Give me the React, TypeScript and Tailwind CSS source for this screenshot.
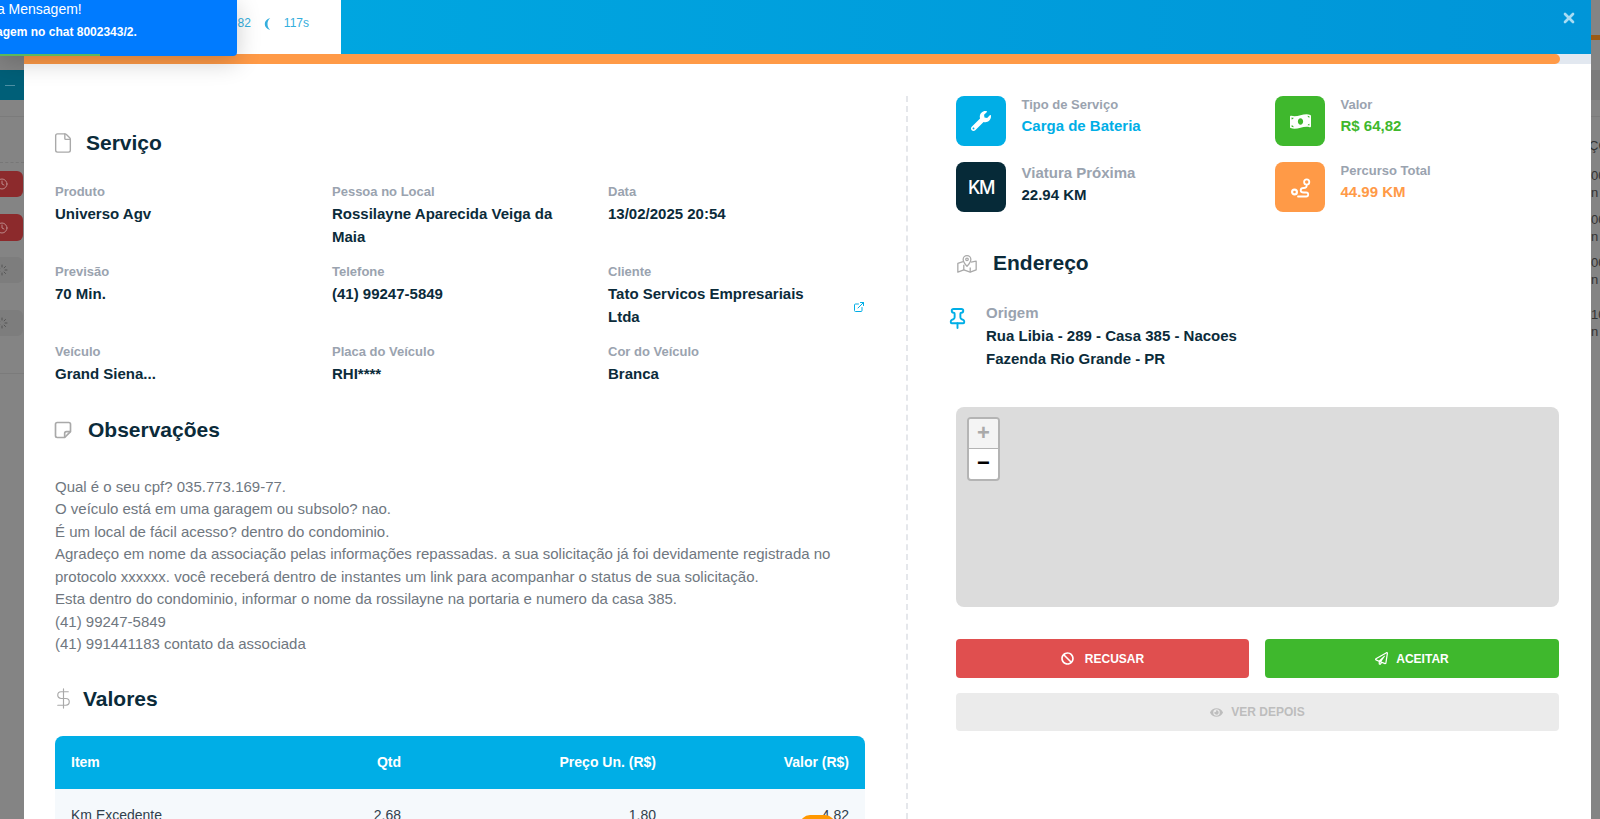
import React from 'react';
import { Clock, DollarSign, ExternalLink, File, Loader, Pin, X } from 'lucide-react';
import { FaBan, FaEye, FaMoneyBillWave, FaRegPaperPlane, FaWrench } from 'react-icons/fa';

const Field = ({ label, value, icon }: { label: string; value: string; icon?: boolean }) => (
  <div className="relative">
    <div className="text-[13px] leading-[22px] font-semibold text-[#9aa3af]">{label}</div>
    <div className="w-[228px] text-[15px] leading-[22.5px] font-bold text-[#0b2b3a]">{value}</div>
    {icon && <ExternalLink className="absolute right-0 top-[40px] text-[#00aee6]" size={12} />}
  </div>
);

const Stat = ({
  label,
  value,
  bg,
  color,
  big,
  children,
}: {
  label: string;
  value: string;
  bg: string;
  color: string;
  big?: boolean;
  children: React.ReactNode;
}) => (
  <div className="flex items-center gap-[15.5px]">
    <div className={`flex h-[50px] w-[50px] items-center justify-center rounded-lg text-white ${bg}`}>{children}</div>
    <div className={big ? '-mt-[6px]' : '-mt-[10px]'}>
      <div className={`font-semibold text-[#9aa3af] ${big ? 'text-[15px] leading-[22px]' : 'text-[13px] leading-[20px]'}`}>{label}</div>
      <div className={`text-[15px] leading-[22px] font-bold ${color}`}>{value}</div>
    </div>
  </div>
);

const Heading = ({ icon, title, gap, wide }: { icon: React.ReactNode; title: string; gap: string; wide?: boolean }) => (
  <div className={`flex items-center text-[#0b2b3a] ${gap}`}>
    <span className={`flex justify-center text-[#a9a9a9] ${wide ? 'w-[22px]' : 'w-[16px]'}`}>{icon}</span>
    <h2 className="text-[21px] leading-[30px] font-bold">{title}</h2>
  </div>
);

const NoteIcon = () => (
  <svg width="20" height="20" viewBox="0 0 24 24" fill="none" stroke="currentColor" strokeWidth="2" strokeLinejoin="round" className="shrink-0">
    <path d="M5 3h14a2 2 0 0 1 2 2v9l-7 7H5a2 2 0 0 1-2-2V5a2 2 0 0 1 2-2z" />
    <path d="M14 21v-5a2 2 0 0 1 2-2h5" />
  </svg>
);

const MapIcon = () => (
  <svg width="22" height="22" viewBox="0 0 24 24" fill="none" stroke="currentColor" strokeWidth="1.4" strokeLinejoin="round" className="shrink-0">
    <path d="M12 15.5c-2.4-2.6-4.2-5-4.2-7.4a4.2 4.2 0 0 1 8.4 0c0 2.4-1.8 4.8-4.2 7.4z" />
    <circle cx="12" cy="8" r="1.4" />
    <path d="M7.6 10.5 2 12.5V22l6.5-2.5 7 2.5 6.5-2.5V10l-5.6 1" />
    <path d="M8.5 14v5.5M15.5 17v5" />
  </svg>
);

const RouteIcon = () => (
  <svg width="24" height="24" viewBox="0 0 24 24" fill="none" stroke="currentColor" strokeWidth="1.8" strokeLinecap="round">
    <circle cx="18.7" cy="7" r="2.6" />
    <circle cx="6.5" cy="17" r="2.4" strokeWidth="2.2" />
    <path d="M18.7 10.5c0 2-1.5 2.5-3 2.5s-3 .7-3 2.2 1.5 2.3 3 2.3h2.5a2 2 0 0 1 0 4H10" />
  </svg>
);

const MoonIcon = () => (
  <svg width="7" height="12" viewBox="0 0 6 11" fill="currentColor" className="mt-[2px]">
    <path d="M5.5 0C2 1 .5 3 .5 5.5S2 10 5.5 11C3.5 9 3 7.5 3 5.5S3.5 2 5.5 0z" />
  </svg>
);

const BackdropLeft = () => (
  <div className="w-[24px] shrink-0 pt-[70px]">
    <div className="flex h-[30px] items-center bg-[#005f78] pl-[5px]">
      <div className="h-px w-[10px] bg-[#4d8fa3]" />
    </div>
    <div className="mt-[16px] h-px bg-[#7b7b7b]" />
    <div className="mt-[45px] border-t border-dashed border-[#777]" />
    <div className="mt-[8px] flex h-[26px] w-[23px] items-center overflow-hidden rounded-r-md bg-[#8c2a2c] text-[#b88]">
      <Clock size={12} className="-ml-[4px] shrink-0" />
    </div>
    <div className="mt-[17px] flex h-[27px] w-[23px] items-center overflow-hidden rounded-r-md bg-[#8c2a2c] text-[#b88]">
      <Clock size={12} className="-ml-[4px] shrink-0" />
    </div>
    <div className="mt-[16px] flex h-[26px] w-[23px] items-center overflow-hidden rounded-r-md bg-[#7d7d7d] text-[#555]">
      <Loader size={12} className="-ml-[4px] shrink-0" />
    </div>
    <div className="mt-[27px] flex h-[26px] w-[23px] items-center overflow-hidden rounded-r-md bg-[#7d7d7d] text-[#555]">
      <Loader size={12} className="-ml-[4px] shrink-0" />
    </div>
    <div className="mt-[37px] h-px bg-[#7b7b7b]" />
  </div>
);

const BackdropRight = () => (
  <div className="w-[9px] shrink-0 overflow-hidden pt-[35px] text-[13px] leading-[17px] whitespace-nowrap text-[#333]">
    <div className="h-[5px] bg-[#9c5a14]" />
    <div className="mt-[30px] h-[30px] bg-[#7b7b7b]" />
    <div className="mt-[16px] h-px bg-[#7b7b7b]" />
    <div className="mt-[20px] -ml-[2px]">ÇO</div>
    <div className="mt-[13px]">00</div>
    <div>n</div>
    <div className="mt-[10px]">00</div>
    <div>n</div>
    <div className="mt-[9px]">00</div>
    <div>n</div>
    <div className="mt-[18px]">10</div>
    <div>n</div>
  </div>
);

export default function App() {
  return (
    <div className="relative flex h-[819px] overflow-hidden bg-[#848484] font-['Liberation_Sans',sans-serif]">
      <BackdropLeft />

      <div className="flex h-full min-w-0 flex-1 flex-col overflow-hidden bg-white">
        <div className="flex h-[54px] shrink-0 bg-gradient-to-r from-[#00aae2] to-[#0095d8]">
          <div className="flex w-[317px] items-start justify-end gap-[13px] bg-white pt-[16px] pr-[32px] text-[12px] leading-[15px] text-[#35aedd]">
            <span>82</span>
            <MoonIcon />
            <span>117s</span>
          </div>
          <div className="flex flex-1 justify-end pt-[10px] pr-[14px] text-[#a8dcf3]">
            <X size={16} strokeWidth={4} />
          </div>
        </div>
        <div className="h-[10px] shrink-0 bg-[#e2e8f0]">
          <div className="h-full w-[1536px] rounded-r-full bg-[#ff9a47]" />
        </div>

        <div className="flex min-h-0 flex-1 pt-[32px]">
          <div className="w-[882px] shrink-0 pr-[41px] pl-[31px]">
            <div className="pt-[32px]">
              <Heading gap="gap-[15px]" icon={<File size={22} strokeWidth={1.5} className="shrink-0" />} title="Serviço" />
            </div>
            <div className="mt-[23px] grid grid-cols-[277px_276px_257px] gap-y-[13px]">
              <Field label="Produto" value="Universo Agv" />
              <Field label="Pessoa no Local" value="Rossilayne Aparecida Veiga da Maia" />
              <Field label="Data" value="13/02/2025 20:54" />
              <Field label="Previsão" value="70 Min." />
              <Field label="Telefone" value="(41) 99247-5849" />
              <Field label="Cliente" value="Tato Servicos Empresariais Ltda" icon />
              <Field label="Veículo" value="Grand Siena..." />
              <Field label="Placa do Veículo" value="RHI****" />
              <Field label="Cor do Veículo" value="Branca" />
            </div>

            <div className="mt-[29px]">
              <Heading gap="gap-[17px]" icon={<NoteIcon />} title="Observações" />
            </div>
            <div className="mt-[31px] text-[15px] leading-[22.5px] text-[#6f7780]">
              <p>Qual é o seu cpf? 035.773.169-77.</p>
              <p>O veículo está em uma garagem ou subsolo? nao.</p>
              <p>É um local de fácil acesso? dentro do condominio.</p>
              <p>
                Agradeço em nome da associação pelas informações repassadas. a sua solicitação já foi devidamente registrada no
                protocolo xxxxxx. você receberá dentro de instantes um link para acompanhar o status de sua solicitação.
              </p>
              <p>Esta dentro do condominio, informar o nome da rossilayne na portaria e numero da casa 385.</p>
              <p>(41) 99247-5849</p>
              <p>(41) 991441183 contato da associada</p>
            </div>

            <div className="mt-[28px]">
              <Heading gap="gap-[12px]" icon={<DollarSign size={23} strokeWidth={1.2} className="shrink-0" />} title="Valores" />
            </div>
            <div className="mt-[22px] overflow-hidden rounded-t-lg text-[14px]">
              <div className="grid h-[53px] grid-cols-[264px_82px_255px_209px] items-center bg-[#00aee6] font-bold text-white">
                <div className="pl-4">Item</div>
                <div className="text-right">Qtd</div>
                <div className="text-right">Preço Un. (R$)</div>
                <div className="pr-4 text-right">Valor (R$)</div>
              </div>
              <div className="grid h-[53px] grid-cols-[264px_82px_255px_209px] items-center bg-[#f5f9fc] text-[#30404c]">
                <div className="pl-4">Km Excedente</div>
                <div className="text-right">2,68</div>
                <div className="text-right">1,80</div>
                <div className="pr-4 text-right">4,82</div>
              </div>
            </div>
          </div>

          <div className="flex-1 border-l-2 border-dashed border-[#e5e7eb] pr-[32px] pl-[48px]">
            <div className="grid grid-cols-[319px_1fr] gap-y-[16px]">
              <Stat label="Tipo de Serviço" value="Carga de Bateria" bg="bg-[#00aee6]" color="text-[#00aee6]">
                <FaWrench size={20} />
              </Stat>
              <Stat label="Valor" value="R$ 64,82" bg="bg-[#3fb82d]" color="text-[#3fb82d]">
                <FaMoneyBillWave size={21} />
              </Stat>
              <Stat label="Viatura Próxima" value="22.94 KM" bg="bg-[#062a38]" color="text-[#0b2b3a]" big>
                <span className="font-['Inter',sans-serif] text-[18px] font-medium tracking-[-1.5px]">KM</span>
              </Stat>
              <Stat label="Percurso Total" value="44.99 KM" bg="bg-[#ff9a47]" color="text-[#ff9a47]">
                <RouteIcon />
              </Stat>
            </div>

            <div className="mt-[36px]">
              <Heading gap="gap-[15px]" wide icon={<MapIcon />} title="Endereço" />
            </div>

            <div className="mt-[23px] -ml-[10px] flex gap-[17px]">
              <Pin size={23} className="mt-[6px] shrink-0 text-[#00aee6]" />
              <div>
                <div className="text-[15px] leading-[24px] font-semibold text-[#9aa3af]">Origem</div>
                <div className="text-[15px] leading-[22.5px] font-bold text-[#0b2b3a]">
                  Rua Libia - 289 - Casa 385 - Nacoes
                  <br />
                  Fazenda Rio Grande - PR
                </div>
              </div>
            </div>

            <div className="mt-[37px] h-[200px] rounded-lg bg-[#dcdcdc] pt-[10px] pl-[11px]">
              <div className="w-[33px] overflow-hidden rounded-[4px] border-2 border-[#b4b4b4] bg-white text-center">
                <div className="h-[30px] border-b border-[#b4b4b4] bg-[#f4f4f4] text-[22px] leading-[28px] font-bold text-[#aaa]">+</div>
                <div className="h-[30px] text-[22px] leading-[28px] font-bold text-black">−</div>
              </div>
            </div>

            <div className="mt-[32px] grid grid-cols-[293px_1fr] gap-x-[16px] gap-y-[15px] text-[12px] font-bold">
              <button className="flex h-[39px] items-center justify-center gap-[11px] rounded bg-[#e04f4f] text-white">
                <FaBan size={13} />
                RECUSAR
              </button>
              <button className="flex h-[39px] items-center justify-center gap-[8px] rounded bg-[#3fb82d] text-white">
                <FaRegPaperPlane size={13} />
                ACEITAR
              </button>
              <button className="col-span-2 flex h-[38px] items-center justify-center gap-[8px] rounded bg-[#ebebeb] text-[#bdbdbd]">
                <FaEye size={13} />
                VER DEPOIS
              </button>
            </div>
          </div>
        </div>
      </div>

      <BackdropRight />

      <div className="absolute top-0 left-0 h-[56px] w-[237px] overflow-hidden rounded-br bg-[#007bff] text-white shadow-[0_6px_24px_rgba(0,0,0,0.2)]">
        <div className="-ml-[28px] pt-[1px] text-[14px] leading-[17px] whitespace-nowrap">Nova Mensagem!</div>
        <div className="mt-[7px] -ml-[68px] text-[12px] leading-[15px] font-semibold whitespace-nowrap">Nova mensagem no chat 8002343/2.</div>
        <div className="absolute bottom-0 left-0 h-[2px] w-[100px] bg-[#5cb85c]" />
      </div>
      <div className="absolute top-[815px] left-[800px] h-[20px] w-[35px] rounded-full bg-[#ff9800]" />
    </div>
  );
}
